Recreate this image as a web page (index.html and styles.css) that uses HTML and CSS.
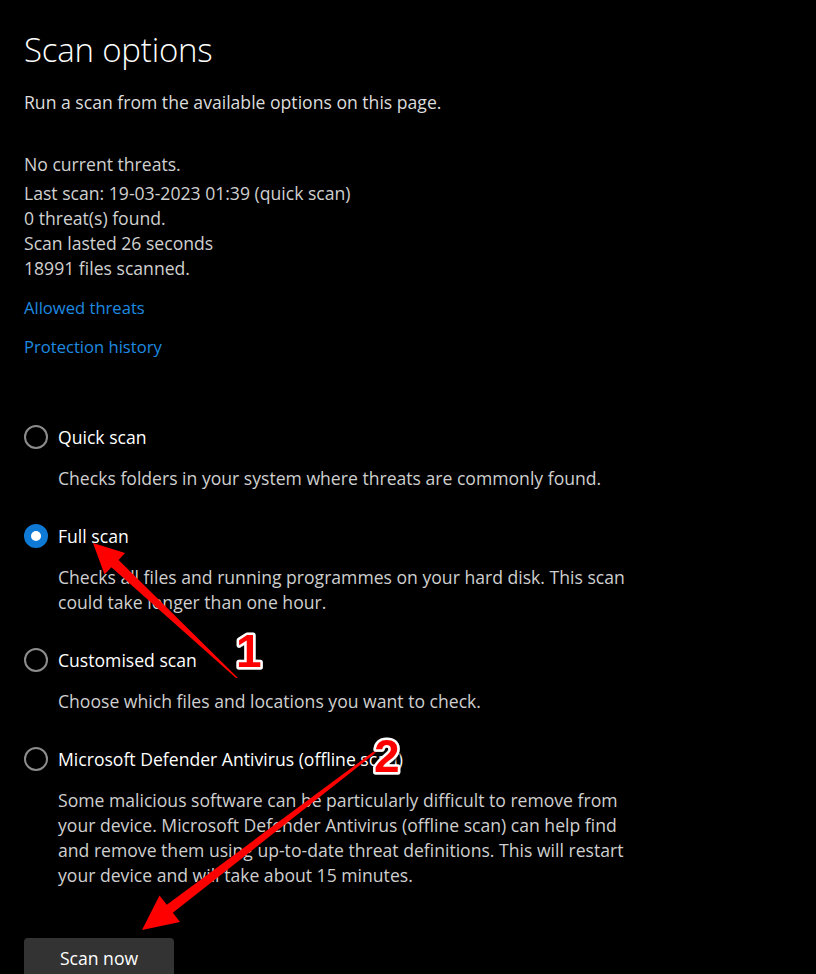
FILE: index.html
```html
<!DOCTYPE html>
<html lang="en">
<head>
<meta charset="utf-8">
<title>Scan options</title>
<link rel="stylesheet" href="styles.css">
</head>
<body>
<main class="page">
  <h1 class="title">Scan options</h1>
  <p class="subtitle">Run a scan from the available options on this page.</p>

  <section class="status">
    <p class="status-head">No current threats.</p>
    <p>Last scan: 19-03-2023 01:39 (quick scan)</p>
    <p>0 threat(s) found.</p>
    <p>Scan lasted 26 seconds</p>
    <p>18991 files scanned.</p>
  </section>

  <nav class="links">
    <a href="#" class="link">Allowed threats</a>
    <a href="#" class="link">Protection history</a>
  </nav>

  <section class="options">
    <div class="option">
      <label class="option-row"><span class="radio"></span><span class="option-label">Quick scan</span></label>
      <p class="option-desc">Checks folders in your system where threats are commonly found.</p>
    </div>
    <div class="option">
      <label class="option-row"><span class="radio checked"></span><span class="option-label">Full scan</span></label>
      <p class="option-desc">Checks all files and running programmes on your hard disk. This scan<br>could take longer than one hour.</p>
    </div>
    <div class="option">
      <label class="option-row"><span class="radio"></span><span class="option-label">Customised scan</span></label>
      <p class="option-desc">Choose which files and locations you want to check.</p>
    </div>
    <div class="option">
      <label class="option-row"><span class="radio"></span><span class="option-label">Microsoft Defender Antivirus (offline scan)</span></label>
      <p class="option-desc">Some malicious software can be particularly difficult to remove from<br>your device. Microsoft Defender Antivirus (offline scan) can help find<br>and remove them using up-to-date threat definitions. This will restart<br>your device and will take about 15 minutes.</p>
    </div>
  </section>

  <button class="scan-btn">Scan now</button>
</main>

<svg class="annotations" width="816" height="974" viewBox="0 0 816 974" xmlns="http://www.w3.org/2000/svg">
  <defs>
    <filter id="sh" x="-30%" y="-30%" width="160%" height="160%">
      <feDropShadow dx="1" dy="2" stdDeviation="1.2" flood-color="#000" flood-opacity="0.8"/>
    </filter>
  </defs>
  <g fill="#f00">
    <polygon points="93,543 125,553 118.6,560 238,678 236,678 111.4,567.3 104.5,574.5"/>
    <polygon points="142,930 159.5,895.5 166.8,904.7 377,749 378,751 172.8,912.7 180,922"/>
  </g>
  <g class="num" filter="url(#sh)">
    <text x="236" y="667">1</text>
    <text x="374" y="772">2</text>
  </g>
</svg>
</body>
</html>
```
FILE: styles.css
```css
html, body {
  margin: 0;
  padding: 0;
  background: #000;
}
body {
  width: 816px;
  height: 974px;
  overflow: hidden;
  position: relative;
  font-family: "Open Sans", "Noto Sans", sans-serif;
  color: #d6d6d6;
}
.page {
  padding: 30px 24px 0 24px;
}
p { margin: 0; }
.title {
  margin: 0;
  font-weight: 300;
  font-size: 33px;
  line-height: 40px;
  color: #fff;
  letter-spacing: -0.2px;
}
.subtitle {
  margin-top: 20px;
  font-size: 17.6px;
  line-height: 24px;
  color: #dcdcdc;
}
.status {
  margin-top: 38px;
  font-size: 17.6px;
  line-height: 25px;
  color: #d0d0d0;
}
.status-head { margin-bottom: 4px; }
.links {
  margin-top: 15px;
  display: flex;
  flex-direction: column;
  gap: 15px;
  align-items: flex-start;
}
.link {
  color: #1e8ae0;
  text-decoration: none;
  font-size: 16.6px;
  line-height: 24px;
}
.options {
  margin-top: 66px;
  display: flex;
  flex-direction: column;
  gap: 33px;
}
.option-row {
  display: flex;
  align-items: center;
  gap: 10px;
  height: 24px;
}
.radio {
  width: 20px;
  height: 20px;
  border: 2px solid #8c8c8c;
  border-radius: 50%;
  box-sizing: content-box;
  flex: none;
}
.radio.checked {
  border-color: #0f7ad6;
  background: #0f7ad6;
  position: relative;
}
.radio.checked::after {
  content: "";
  position: absolute;
  left: 5px;
  top: 5px;
  width: 10px;
  height: 10px;
  border-radius: 50%;
  background: #fff;
}
.option-label {
  font-size: 17.6px;
  color: #fff;
}
.option-desc {
  margin-top: 17px;
  margin-left: 34px;
  font-size: 17.6px;
  line-height: 25px;
  color: #cfcfcf;
}
.scan-btn {
  margin-top: 50px;
  width: 150px;
  height: 40px;
  background: #333;
  border: none;
  border-radius: 4px;
  color: #fff;
  font-family: inherit;
  font-size: 17.6px;
  padding: 0;
  display: block;
}
.annotations {
  position: absolute;
  left: 0;
  top: 0;
  pointer-events: none;
}
.num text {
  font-family: "Liberation Sans", Arial, sans-serif;
  font-weight: 700;
  font-size: 46px;
  fill: #f00;
  stroke: #fff;
  stroke-width: 5px;
  paint-order: stroke;
  stroke-linejoin: round;
}
```
